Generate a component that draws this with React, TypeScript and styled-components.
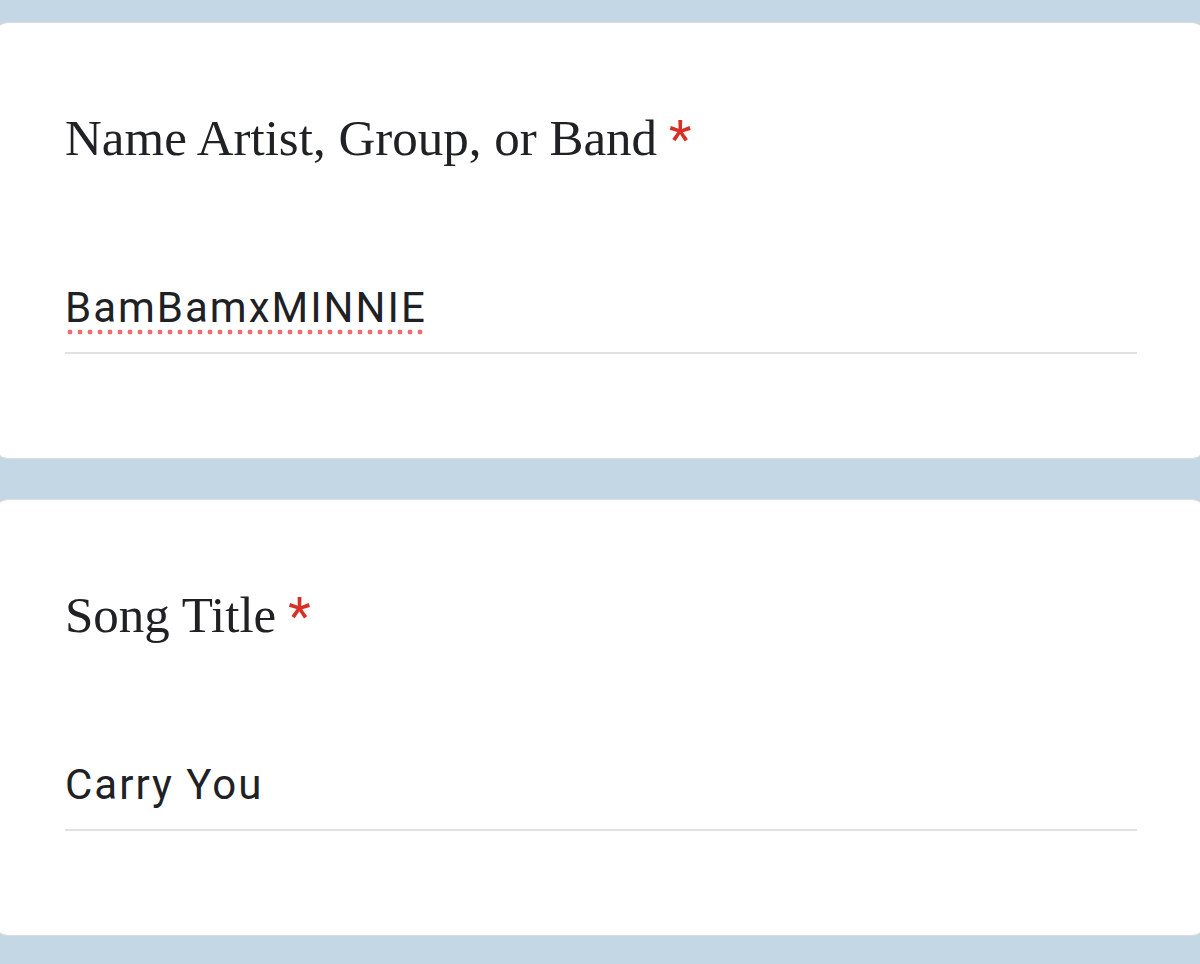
import React from "react";
import styled, { createGlobalStyle } from "styled-components";

const Global = createGlobalStyle`
  html, body {
    margin: 0;
    padding: 0;
    background: #c4d7e4;
    overflow: hidden;
  }
  body {
    font-family: Roboto, "Liberation Sans", sans-serif;
  }
`;

const Page = styled.div`
  display: flex;
  flex-direction: column;
  gap: 40px;
  padding-top: 22px;
  margin: 0 -6px;
  min-height: 964px;
  box-sizing: border-box;
`;

const Card = styled.section`
  background: #ffffff;
  border: 1px solid #dadce0;
  border-radius: 14px;
  padding: 90px 68px 104px 70px;
  display: flex;
  flex-direction: column;
  gap: 121px;
`;

const Title = styled.div`
  font-family: "Liberation Serif", "Times New Roman", serif;
  font-size: 51px;
  line-height: 50px;
  height: 50px;
  color: #202124;
  white-space: nowrap;
`;

const Required = styled.span`
  font-family: Roboto, "Liberation Sans", sans-serif;
  color: #d93025;
  font-size: 52px;
  line-height: 0;
  margin-left: 12px;
  position: relative;
  top: 2px;
`;

const Field = styled.div`
  font-family: Roboto, "Liberation Sans", sans-serif;
  font-size: 42px;
  letter-spacing: 2px;
  line-height: 48px;
  height: 48px;
  color: #202124;
  padding-bottom: 20px;
  border-bottom: 2px solid #e0e1e3;
  white-space: nowrap;
`;

const Misspelled = styled.span`
  background-image: radial-gradient(circle, #f26d6d 2.2px, transparent 2.7px);
  background-size: 10px 6px;
  background-repeat: repeat-x;
  background-position: 0 100%;
  padding-bottom: 3px;
  line-height: 0;
`;

const questions = [
  { title: "Name Artist, Group, or Band", answer: "BamBamxMINNIE", misspelled: true },
  { title: "Song Title", answer: "Carry You", misspelled: false },
];

export default function App() {
  return (
    <>
      <Global />
      <Page>
        {questions.map((q) => (
          <Card key={q.title}>
            <Title>
              {q.title}
              <Required>*</Required>
            </Title>
            <Field>{q.misspelled ? <Misspelled>{q.answer}</Misspelled> : q.answer}</Field>
          </Card>
        ))}
      </Page>
    </>
  );
}
